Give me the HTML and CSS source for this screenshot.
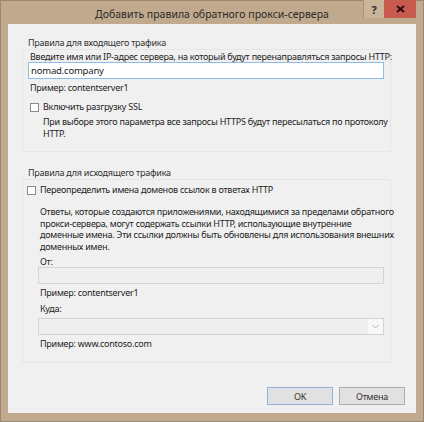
FILE: index.html
```html
<!DOCTYPE html>
<html lang="ru">
<head>
    <meta charset="UTF-8">
    <title>Добавить правила обратного прокси-сервера</title>
    <link rel="stylesheet" href="styles.css">
</head>
<body>
<div class="window">
    <div class="titlebar">
        <div class="spacer"></div>
        <div class="title">Добавить правила обратного прокси-сервера</div>
        <div class="controls">
            <div class="btn-help">?</div>
            <div class="btn-close">
                <svg width="9" height="8" viewBox="0 0 9 8">
                    <path d="M1 1 L8 7 M8 1 L1 7" stroke="#2b0d0d" stroke-width="2"/>
                </svg>
            </div>
        </div>
    </div>
    <div class="client">
        <div class="group-title">Правила для входящего трафика</div>
        <div class="box box-in">
            <div class="label">Введите имя или IP-адрес сервера, на который будут перенаправляться запросы HTTP:</div>
            <div class="field focused">nomad.company</div>
            <div class="label hint">Пример: contentserver1</div>
            <div class="check">
                <span class="checkbox"></span>
                <span>Включить разгрузку SSL</span>
            </div>
            <div class="note">При выборе этого параметра все запросы HTTPS будут пересылаться по протоколу<br>HTTP.</div>
        </div>

        <div class="group-title second">Правила для исходящего трафика</div>
        <div class="box box-out">
            <div class="check check-out">
                <span class="checkbox"></span>
                <span>Переопределить имена доменов ссылок в ответах HTTP</span>
            </div>
            <div class="inner">
                <div class="note wide">Ответы, которые создаются приложениями, находящимися за пределами обратного<br>прокси-сервера, могут содержать ссылки HTTP, использующие внутренние<br>доменные имена. Эти ссылки должны быть обновлены для использования внешних<br>доменных имен.</div>
                <div class="label from">От:</div>
                <div class="field disabled"></div>
                <div class="label hint">Пример: contentserver1</div>
                <div class="label to">Куда:</div>
                <div class="field disabled combo">
                    <span class="arrow">
                        <svg width="7" height="5" viewBox="0 0 7 5">
                            <path d="M0.5 1 L3.5 4 L6.5 1" stroke="#b4b4b4" fill="none"/>
                        </svg>
                    </span>
                </div>
                <div class="label hint">Пример: www.contoso.com</div>
            </div>
        </div>

        <div class="buttons">
            <div class="button default">OK</div>
            <div class="button">Отмена</div>
        </div>
    </div>
</div>
</body>
</html>
```

FILE: styles.css
```css
html, body {
    margin: 0;
    height: 100%;
}

body {
    font-family: 'Noto Sans', 'Open Sans', sans-serif;
    font-size: 9px;
    letter-spacing: -0.25px;
    color: #222;
    background-color: #bca78b;
}

.window {
    box-sizing: border-box;
    width: 424px;
    height: 422px;
    display: flex;
    flex-direction: column;
    background-color: #c0a98c;
    border: 1px solid #9a876f;
}

.titlebar {
    display: grid;
    grid-template-columns: 60px 1fr 60px;
    height: 23px;
}

.title {
    text-align: center;
    font-size: 10.5px;
    letter-spacing: 0;
    line-height: 26px;
    color: #2a2a2a;
}

.controls {
    display: flex;
    align-items: flex-start;
}

.btn-help {
    width: 20px;
    height: 18px;
    margin-top: -1px;
    display: flex;
    justify-content: center;
    align-items: center;
    background-color: #c9b59a;
    border-left: 1px solid #a99477;
    font-weight: bold;
    font-size: 11px;
    color: #2b2b2b;
}

.btn-close {
    width: 32px;
    height: 18px;
    margin-top: -1px;
    display: flex;
    justify-content: center;
    align-items: center;
    background-color: #c85a4f;
}

.client {
    flex: 1;
    margin: 0 7px 8px 7px;
    background-color: #f0f0f0;
    padding: 13px 25px 0 14px;
    display: flex;
    flex-direction: column;
}

.group-title {
    padding-left: 6px;
    line-height: 12px;
    height: 12px;
    color: #333;
}

.group-title.second {
    margin-top: 15px;
}

.box {
    box-sizing: border-box;
    border: 1px solid #e6e6e6;
    padding: 1px 6px 0 5px;
}

.box-in {
    height: 103px;
}

.label {
    line-height: 11px;
    padding-left: 2px;
    white-space: nowrap;
}

.field {
    box-sizing: border-box;
    height: 17px;
    border: 1px solid #c9c9c9;
    background-color: #fff;
    padding-left: 2px;
    line-height: 15px;
    font-size: 9.5px;
    letter-spacing: -0.2px;
}

.field.focused {
    border-color: #8fbce9;
}

.field.disabled {
    background-color: #efefef;
    border-color: #d4d4d4;
}

.field.combo {
    display: flex;
    justify-content: flex-end;
}

.arrow {
    width: 15px;
    display: flex;
    justify-content: center;
    align-items: center;
    background-color: #f7f7f7;
}

.hint {
    margin-top: 3px;
}

.check {
    display: flex;
    align-items: center;
    gap: 4px;
    margin-top: 8px;
    padding-left: 2px;
    line-height: 12px;
    white-space: nowrap;
}

.checkbox {
    box-sizing: border-box;
    width: 9px;
    height: 9px;
    border: 1px solid #8a8a8a;
    background-color: #fff;
}

.note {
    margin-top: 3px;
    padding-left: 15px;
    line-height: 12px;
    white-space: nowrap;
}

.box-out {
    height: 184px;
    padding-left: 4px;
}

.check-out {
    margin-top: 3px;
    padding-left: 0;
}

.inner {
    padding-left: 11px;
}

.note.wide {
    margin-top: 10px;
    padding-left: 2px;
    line-height: 11.7px;
}

.from {
    margin-top: 3px;
}

.to {
    margin-top: 5px;
}

.to + .field {
    margin-top: 4px;
}

.buttons {
    display: flex;
    justify-content: flex-end;
    gap: 6px;
    margin-top: 24px;
    margin-right: -14px;
}

.button {
    box-sizing: border-box;
    width: 66px;
    height: 18px;
    display: flex;
    justify-content: center;
    align-items: center;
    background-color: #e1e1e1;
    border: 1px solid #adadad;
    color: #333;
}

.button.default {
    border-color: #8fb5dc;
}
```
